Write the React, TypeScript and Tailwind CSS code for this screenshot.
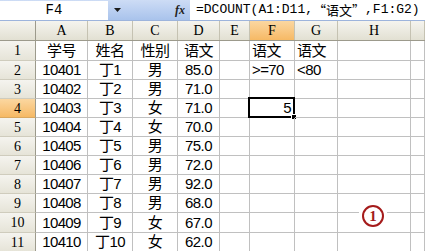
import React from 'react';

const colHeads = [
  { key: 'A', w: 52 },
  { key: 'B', w: 45 },
  { key: 'C', w: 45 },
  { key: 'D', w: 42 },
  { key: 'E', w: 30 },
  { key: 'F', w: 45 },
  { key: 'G', w: 43 },
  { key: 'H', w: 73 },
  { key: '', w: 0 },
];

const rowHeights = ['h-[20px]', 'h-[19px]', 'h-[19px]', 'h-[19px]', 'h-[19px]', 'h-[19px]', 'h-[19px]', 'h-[19px]', 'h-[19px]', 'h-[20px]', 'h-[19px]'];

const data: string[][] = [
  ['学号', '姓名', '性别', '语文', '', '语文', '语文'],
  ['10401', '丁1', '男', '85.0', '', '>=70', '<80'],
  ['10402', '丁2', '男', '71.0'],
  ['10403', '丁3', '女', '71.0', '', '5'],
  ['10404', '丁4', '女', '70.0'],
  ['10405', '丁5', '男', '75.0'],
  ['10406', '丁6', '男', '72.0'],
  ['10407', '丁7', '男', '92.0'],
  ['10408', '丁8', '男', '68.0'],
  ['10409', '丁9', '女', '67.0'],
  ['10410', '丁10', '女', '62.0'],
];

const cellFont = { fontFamily: '"Liberation Sans", "Noto Sans CJK SC", sans-serif' };
const headFont = { fontFamily: '"Liberation Serif", "Noto Sans CJK SC", serif' };

export default function App() {
  return (
    <div className="relative w-[425px] h-[251px] overflow-hidden bg-white select-none">
      {/* formula bar */}
      <div className="flex h-[21px] bg-gradient-to-b from-[#cddcf5] to-[#a9c3ec] border-b border-[#9db4dc]">
        <div
          className="w-[108px] h-[19px] mt-[1px] bg-white flex items-center justify-center text-[14px] text-black"
          style={{ fontFamily: '"Liberation Mono", monospace' }}
        >
          F4
        </div>
        <div className="w-[18px] flex items-center justify-center">
          <svg width="7" height="4" viewBox="0 0 7 4">
            <path d="M0 0h7L3.5 4z" fill="#1b1b1b" />
          </svg>
        </div>
        <div className="flex-1 flex items-center justify-end pr-[5px]">
          <span className="italic font-bold text-[12px] text-[#222]" style={headFont}>
            fx
          </span>
        </div>
        <div
          className="w-[235px] h-[20px] bg-white flex items-center pl-[6px] text-[13px] text-black whitespace-nowrap"
          style={{ fontFamily: '"Liberation Mono", "Noto Sans CJK SC", monospace' }}
        >
          =DCOUNT(A1:D11,
          <span className="text-[13px]" style={{ fontFamily: '"Noto Sans CJK SC", sans-serif' }}>“语文”</span>
          ,F1:G2)
        </div>
      </div>

      {/* header row */}
      <div className="flex h-[20px] border-b border-[#9c9a8c]">
        <div className="w-[36px] shrink-0 border-r border-[#9c9a8c] bg-gradient-to-b from-[#f5f4ef] to-[#e2e0d2]" />
        {colHeads.map((c, i) => (
          <div
            key={i}
            className={
              'flex items-center justify-center border-r border-[#c5c2b2] text-[14px] text-black ' +
              (c.key === 'F' ? 'bg-gradient-to-b from-[#fbd7a0] to-[#f6b964] ' : 'bg-gradient-to-b from-[#f5f4ef] to-[#e2e0d2] ') +
              (c.w ? 'shrink-0' : 'flex-1')
            }
            style={{ ...headFont, width: c.w || undefined }}
          >
            {c.key}
          </div>
        ))}
      </div>

      {/* body rows */}
      {data.map((row, r) => (
        <div key={r} className={'flex ' + rowHeights[r]}>
          <div
            className={
              'w-[36px] shrink-0 flex items-center justify-center border-r border-[#9c9a8c] border-b text-[14px] text-black ' +
              (r === 3
                ? 'bg-gradient-to-b from-[#fbd7a0] to-[#f6b964] border-b-[#d9a860]'
                : 'bg-gradient-to-b from-[#f5f4ef] to-[#e6e4d8] border-b-[#cfccbd]')
            }
            style={headFont}
          >
            {r + 1}
          </div>
          {colHeads.map((c, i) => {
            const v = row[i] ?? '';
            const left = i === 5 || i === 6;
            const isSel = r === 3 && i === 5;
            return (
              <div
                key={i}
                className={
                  'relative flex items-end pb-[1px] border-r border-b border-[#c0c0c0] text-[15px] text-black tracking-[-0.6px] whitespace-nowrap ' +
                  (isSel ? 'justify-end pr-[3px] ' : left ? 'justify-start pl-[2px] ' : 'justify-center ') +
                  (c.w ? 'shrink-0' : 'flex-1')
                }
                style={{ ...cellFont, width: c.w || undefined }}
              >
                <span className="leading-[17px]">{v}</span>
                {isSel && (
                  <>
                    <div className="absolute -left-[2px] -top-[2px] -right-[1px] -bottom-[1px] border-2 border-black pointer-events-none" />
                    <div className="absolute -right-[3px] -bottom-[3px] w-[6px] h-[6px] bg-black border border-white" />
                  </>
                )}
              </div>
            );
          })}
        </div>
      ))}

      {/* annotation mark */}
      <div className="absolute left-[359px] top-[204px] w-[28px] h-[24px] bg-white flex items-center justify-center">
        <div
          className="w-[22px] h-[22px] rounded-full border-2 border-[#a51b1b] flex items-center justify-center text-[15px] font-bold text-[#a51b1b]"
          style={headFont}
        >
          1
        </div>
      </div>
    </div>
  );
}
